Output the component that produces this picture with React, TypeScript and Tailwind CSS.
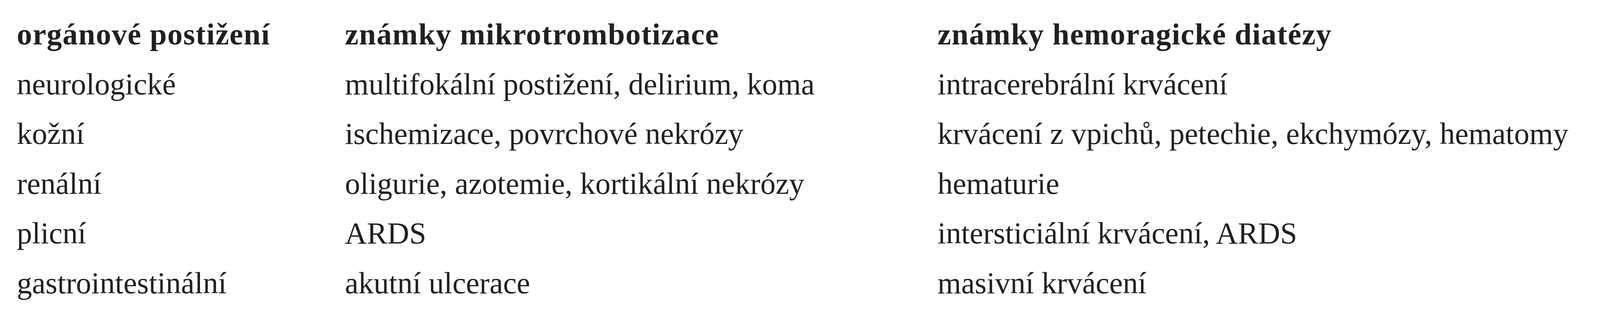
const rows: [string, string, string][] = [
  ["neurologické", "multifokální postižení, delirium, koma", "intracerebrální krvácení"],
  ["kožní", "ischemizace, povrchové nekrózy", "krvácení z vpichů, petechie, ekchymózy, hematomy"],
  ["renální", "oligurie, azotemie, kortikální nekrózy", "hematurie"],
  ["plicní", "ARDS", "intersticiální krvácení, ARDS"],
  ["gastrointestinální", "akutní ulcerace", "masivní krvácení"],
];

export default function App() {
  return (
    <div className="w-full h-[800px] bg-white text-[#231f20] font-['Liberation_Serif',serif] text-[78px] leading-[127.5px] pt-[24px] pl-[43px]">
      <div className="grid grid-cols-[840px_1517px_1fr] whitespace-nowrap">
        {/* Header */}
        <div className="font-bold tracking-[1.5px]">orgánové postižení</div>
        <div className="font-bold tracking-[1.5px]">známky mikrotrombotizace</div>
        <div className="font-bold tracking-[1.5px]">známky hemoragické diatézy</div>

        {rows.map(([organ, micro, hemo]) => (
          <div key={organ} className="contents">
            <div>{organ}</div>
            <div>{micro}</div>
            <div>{hemo}</div>
          </div>
        ))}
      </div>
    </div>
  );
}
